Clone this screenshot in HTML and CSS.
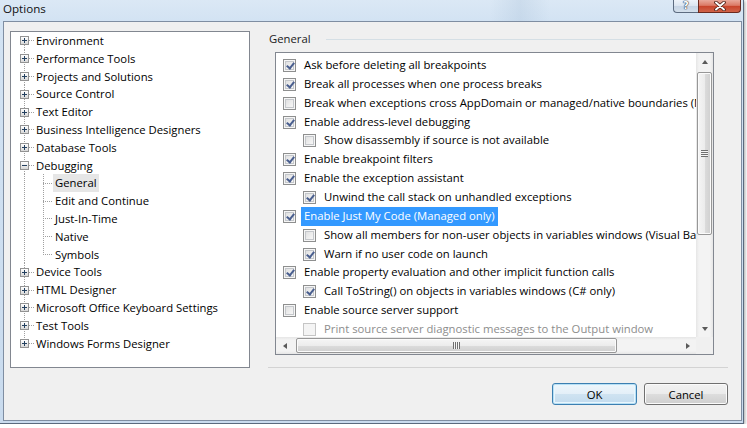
FILE: index.html
```html
<!DOCTYPE html>
<html>
<head>
<meta charset="utf-8">
<title>Options</title>
<link rel="stylesheet" href="styles.css">
</head>
<body>
<div class="window">
  <div class="titlebar">
    <span class="title">Options</span>
    <div class="caption">
      <span class="cap-btn help">?</span>
      <span class="cap-btn close">
        <svg width="12" height="10" viewBox="0 0 12 10">
          <path d="M2 1.5 L10 8.5 M10 1.5 L2 8.5" stroke="#4a1c14" stroke-width="3.6" stroke-linecap="round"/>
          <path d="M2 1.5 L10 8.5 M10 1.5 L2 8.5" stroke="#ffffff" stroke-width="1.9" stroke-linecap="round"/>
        </svg>
      </span>
    </div>
  </div>
  <div class="client">
    <div class="tree">
      <div class="node first"><span class="exp plus"></span><span class="dash"></span><span class="label">Environment</span></div>
      <div class="node"><span class="exp plus"></span><span class="dash"></span><span class="label">Performance Tools</span></div>
      <div class="node"><span class="exp plus"></span><span class="dash"></span><span class="label">Projects and Solutions</span></div>
      <div class="node"><span class="exp plus"></span><span class="dash"></span><span class="label">Source Control</span></div>
      <div class="node"><span class="exp plus"></span><span class="dash"></span><span class="label">Text Editor</span></div>
      <div class="node"><span class="exp plus"></span><span class="dash"></span><span class="label">Business Intelligence Designers</span></div>
      <div class="node"><span class="exp plus"></span><span class="dash"></span><span class="label">Database Tools</span></div>
      <div class="node"><span class="exp minus"></span><span class="dash"></span><span class="label">Debugging</span></div>
      <div class="node child"><span class="dash long"></span><span class="label sel">General</span></div>
      <div class="node child"><span class="dash long"></span><span class="label">Edit and Continue</span></div>
      <div class="node child"><span class="dash long"></span><span class="label">Just-In-Time</span></div>
      <div class="node child"><span class="dash long"></span><span class="label">Native</span></div>
      <div class="node child lastchild"><span class="dash long"></span><span class="label">Symbols</span></div>
      <div class="node"><span class="exp plus"></span><span class="dash"></span><span class="label">Device Tools</span></div>
      <div class="node"><span class="exp plus"></span><span class="dash"></span><span class="label">HTML Designer</span></div>
      <div class="node"><span class="exp plus"></span><span class="dash"></span><span class="label">Microsoft Office Keyboard Settings</span></div>
      <div class="node"><span class="exp plus"></span><span class="dash"></span><span class="label">Test Tools</span></div>
      <div class="node last"><span class="exp plus"></span><span class="dash"></span><span class="label">Windows Forms Designer</span></div>
    </div>
    <div class="page">
      <div class="group-head"><span class="group-title">General</span><span class="rule"></span></div>
      <div class="listbox">
        <div class="items">
          <div class="opt"><span class="cb on"></span><span class="text">Ask before deleting all breakpoints</span></div>
          <div class="opt"><span class="cb on"></span><span class="text">Break all processes when one process breaks</span></div>
          <div class="opt"><span class="cb"></span><span class="text">Break when exceptions cross AppDomain or managed/native boundaries (Managed only)</span></div>
          <div class="opt"><span class="cb on"></span><span class="text">Enable address-level debugging</span></div>
          <div class="opt sub"><span class="cb"></span><span class="text">Show disassembly if source is not available</span></div>
          <div class="opt"><span class="cb on"></span><span class="text">Enable breakpoint filters</span></div>
          <div class="opt"><span class="cb on"></span><span class="text">Enable the exception assistant</span></div>
          <div class="opt sub"><span class="cb on"></span><span class="text">Unwind the call stack on unhandled exceptions</span></div>
          <div class="opt"><span class="cb on"></span><span class="text hl">Enable Just My Code (Managed only)</span></div>
          <div class="opt sub"><span class="cb"></span><span class="text">Show all members for non-user objects in variables windows (Visual Basic only)</span></div>
          <div class="opt sub"><span class="cb on"></span><span class="text">Warn if no user code on launch</span></div>
          <div class="opt"><span class="cb on"></span><span class="text">Enable property evaluation and other implicit function calls</span></div>
          <div class="opt sub"><span class="cb on"></span><span class="text">Call ToString() on objects in variables windows (C# only)</span></div>
          <div class="opt"><span class="cb"></span><span class="text">Enable source server support</span></div>
          <div class="opt sub disabled"><span class="cb"></span><span class="text">Print source server diagnostic messages to the Output window</span></div>
        </div>
        <div class="vscroll">
          <span class="sbtn"><span class="arrow up"></span></span>
          <span class="track"><span class="thumb"><span class="grip"></span></span></span>
          <span class="sbtn"><span class="arrow down"></span></span>
        </div>
        <div class="hscroll">
          <span class="sbtn"><span class="arrow left"></span></span>
          <span class="track"><span class="thumb"><span class="grip"></span></span></span>
          <span class="sbtn"><span class="arrow right"></span></span>
        </div>
        <div class="corner"></div>
      </div>
      <div class="sep"></div>
      <div class="buttons">
        <button class="btn default">OK</button>
        <button class="btn">Cancel</button>
      </div>
    </div>
  </div>
</div>
</body>
</html>
```
FILE: styles.css
```css
:root {
  --dots-v: repeating-linear-gradient(to bottom, #a0a0a0 0 1px, transparent 1px 2px);
  --dots-h: repeating-linear-gradient(to right, #a0a0a0 0 1px, transparent 1px 2px);
}

* { box-sizing: border-box; }

body {
  margin: 0;
  background: #ffffff;
  font-family: "Open Sans", "Noto Sans", sans-serif;
  font-size: 11.3px;
  color: #000;
}

.window {
  width: 744px;
  height: 424px;
  display: flex;
  flex-direction: column;
  background: linear-gradient(to bottom, #dbe8f5 0, #d3e3f3 20px, #c9dbee 100%);
  border-right: 1px solid #5a6a7e;
  border-bottom: 1px solid #5a6a7e;
  box-shadow: 1px 1px 3px rgba(0, 0, 0, 0.35);
}

.titlebar {
  height: 21px;
  flex: none;
  display: flex;
  align-items: flex-start;
  padding-left: 3px;
  background: linear-gradient(to right, rgba(255,255,255,0) 0, rgba(255,255,255,0) 66%, rgba(160,185,210,0.25) 70%, rgba(255,255,255,0) 74%, rgba(255,255,255,0) 100%);
}

.title {
  font-size: 11.6px;
  line-height: 18px;
  color: #111;
}

.caption {
  margin-left: auto;
  margin-right: 2px;
  display: flex;
}

.cap-btn {
  height: 13px;
  display: flex;
  align-items: center;
  justify-content: center;
  border: 1px solid #5d6c80;
  border-top: none;
}

.help {
  width: 25px;
  border-bottom-left-radius: 4px;
  border-right: none;
  background: linear-gradient(to bottom, #eef3f9 0, #dbe5f0 50%, #c6d4e4 51%, #d4e0ec 100%);
  color: #fff;
  font-family: "DejaVu Sans", sans-serif;
  font-weight: bold;
  font-size: 10px;
  line-height: 10px;
  text-shadow: 0 0 1px #2d3c50, 0 0 1px #2d3c50, 0 0 1px #2d3c50;
}

.close {
  width: 43px;
  border-bottom-right-radius: 4px;
  border-color: #6b2a1f;
  background: linear-gradient(to bottom, #e9a99b 0, #db7a66 45%, #c8442b 52%, #d0644a 100%);
}

.client {
  flex: 1;
  margin: 0 1px 2px 3px;
  background: #f0f0f0;
  border: 1px solid #7f8ea2;
  display: grid;
  grid-template-columns: 240px 1fr;
  column-gap: 18px;
  padding: 9px 13px 0 6px;
  align-items: start;
}

/* ---------- tree ---------- */
.tree {
  height: 337px;
  background: #fff;
  border: 1px solid #828790;
}

.node {
  height: 17.8px;
  display: flex;
  align-items: center;
  padding-left: 9px;
  white-space: nowrap;
  background-image: var(--dots-v);
  background-repeat: no-repeat;
  background-position: 13px 0;
  background-size: 1px 100%;
}

.node.first {
  background-position: 13px 100%;
  background-size: 1px 50%;
}

.node.last {
  background-size: 1px 50%;
}

.node.child {
  padding-left: 32px;
  background-image: var(--dots-v), var(--dots-v);
  background-position: 13px 0, 32px 0;
  background-size: 1px 100%, 1px 100%;
}

.node.child.lastchild {
  background-size: 1px 100%, 1px 50%;
}

.exp {
  flex: none;
  width: 9px;
  height: 9px;
  border: 1px solid #939393;
  background-repeat: no-repeat;
}

.exp.plus {
  background-image: linear-gradient(#23405f, #23405f), linear-gradient(#23405f, #23405f), linear-gradient(#ffffff, #d8d8d8);
  background-position: center, center, 0 0;
  background-size: 5px 1px, 1px 5px, 100% 100%;
}

.exp.minus {
  background-image: linear-gradient(#23405f, #23405f), linear-gradient(#ffffff, #d8d8d8);
  background-position: center, 0 0;
  background-size: 5px 1px, 100% 100%;
}

.dash {
  flex: none;
  width: 5px;
  height: 1px;
  background: var(--dots-h);
}

.dash.long { width: 10px; }

.label {
  padding: 0 2px;
  line-height: 17.8px;
}

.label.sel { background: #e6e6e6; }

/* ---------- right page ---------- */
.page {
  display: flex;
  flex-direction: column;
}

.group-head {
  height: 15px;
  display: flex;
  align-items: center;
  padding-left: 1px;
}

.group-title { color: #1a1a1a; }

.rule {
  flex: 1;
  height: 1px;
  margin: 1px 8px 0 15px;
  background: #d5dfe5;
}

.listbox {
  margin: 6px 0 0 7px;
  width: 439px;
  height: 303px;
  border: 1px solid #828790;
  background: #fff;
  display: grid;
  grid-template-columns: 1fr 17px;
  grid-template-rows: 1fr 17px;
}

.items {
  overflow: hidden;
  padding-top: 3px;
  min-width: 0;
}

.opt {
  height: 18.86px;
  display: flex;
  align-items: center;
  padding-left: 7px;
  white-space: nowrap;
}

.opt.sub { padding-left: 27px; }

.cb {
  flex: none;
  position: relative;
  width: 13px;
  height: 13px;
  border: 1px solid #8e8f8f;
  background: linear-gradient(135deg, #d9dadb 0, #eeeeee 55%, #fbfbfb 100%);
  box-shadow: inset 0 0 0 1px #f6f6f6, inset 0 0 0 2px #c4c7cb;
}

.cb.on::after {
  content: "";
  position: absolute;
  left: 3.5px;
  top: 1px;
  width: 3px;
  height: 6px;
  border-right: 2px solid #4a5f8f;
  border-bottom: 2px solid #4a5f8f;
  transform: rotate(38deg);
}

.opt.disabled .cb {
  border-color: #c5c5c5;
  background: #f4f4f4;
  box-shadow: none;
}

.opt.disabled .text { color: #8d8d8d; }

.text {
  margin-left: 5px;
  padding: 0 3px;
  line-height: 18.86px;
}

.text.hl {
  background: #3399ff;
  color: #fff;
}

/* ---------- scrollbars ---------- */
.vscroll {
  display: flex;
  flex-direction: column;
  background: linear-gradient(to right, #e6e6e6 0, #f3f3f3 3px, #f3f3f3 14px, #e6e6e6 100%);
}

.hscroll {
  display: flex;
  background: linear-gradient(to bottom, #e6e6e6 0, #f3f3f3 3px, #f3f3f3 14px, #e6e6e6 100%);
}

.sbtn {
  flex: none;
  width: 17px;
  height: 17px;
  display: flex;
  align-items: center;
  justify-content: center;
}

.arrow {
  width: 0;
  height: 0;
  border: 3px solid transparent;
}

.arrow.up { border-bottom: 4px solid #5a5a5a; border-top: 0; }
.arrow.down { border-top: 4px solid #5a5a5a; border-bottom: 0; }
.arrow.left { border-right: 4px solid #5a5a5a; border-left: 0; }
.arrow.right { border-left: 4px solid #5a5a5a; border-right: 0; }

.track { flex: 1; display: flex; }

.vscroll .track { flex-direction: column; padding-top: 2px; }
.hscroll .track { padding-left: 3px; }

.thumb {
  display: flex;
  align-items: center;
  justify-content: center;
  border: 1px solid #979797;
  border-radius: 2px;
}

.vscroll .thumb {
  height: 163px;
  margin: 0 1px;
  background: linear-gradient(to right, #f5f5f5 0, #ececec 50%, #dcdcdc 51%, #cfcfcf 100%);
  box-shadow: inset 0 0 0 1px #fbfbfb;
}

.hscroll .thumb {
  width: 321px;
  margin: 1px 0;
  background: linear-gradient(to bottom, #f5f5f5 0, #ececec 50%, #dcdcdc 51%, #cfcfcf 100%);
  box-shadow: inset 0 0 0 1px #fbfbfb;
}

.vscroll .grip {
  width: 7px;
  height: 7px;
  background: repeating-linear-gradient(to bottom, #6f6f6f 0 1px, #f4f4f4 1px 2px);
}

.hscroll .grip {
  width: 7px;
  height: 7px;
  background: repeating-linear-gradient(to right, #6f6f6f 0 1px, #f4f4f4 1px 2px);
}

.corner { background: #f0f0f0; }

/* ---------- bottom ---------- */
.sep {
  margin-top: 12px;
  height: 1px;
  background: #d3d3d3;
}

.buttons {
  margin-top: 15px;
  display: flex;
  justify-content: flex-end;
  gap: 7px;
}

.btn {
  width: 84px;
  height: 22px;
  padding: 0;
  font: inherit;
  color: #000;
  border: 1px solid #707070;
  border-radius: 3px;
  background: linear-gradient(to bottom, #f2f2f2 0, #ebebeb 50%, #dddddd 51%, #cfcfcf 100%);
  box-shadow: inset 0 0 0 1px #fbfbfb;
}

.btn.default {
  width: 85px;
  border-color: #3c7fb1;
  background: linear-gradient(to bottom, #eef6fb 0, #e3eff8 50%, #cfe3f1 51%, #c2dbee 100%);
  box-shadow: inset 0 0 0 1px #b8e0f5, inset 0 0 0 2px #e9f6fd;
}
```
